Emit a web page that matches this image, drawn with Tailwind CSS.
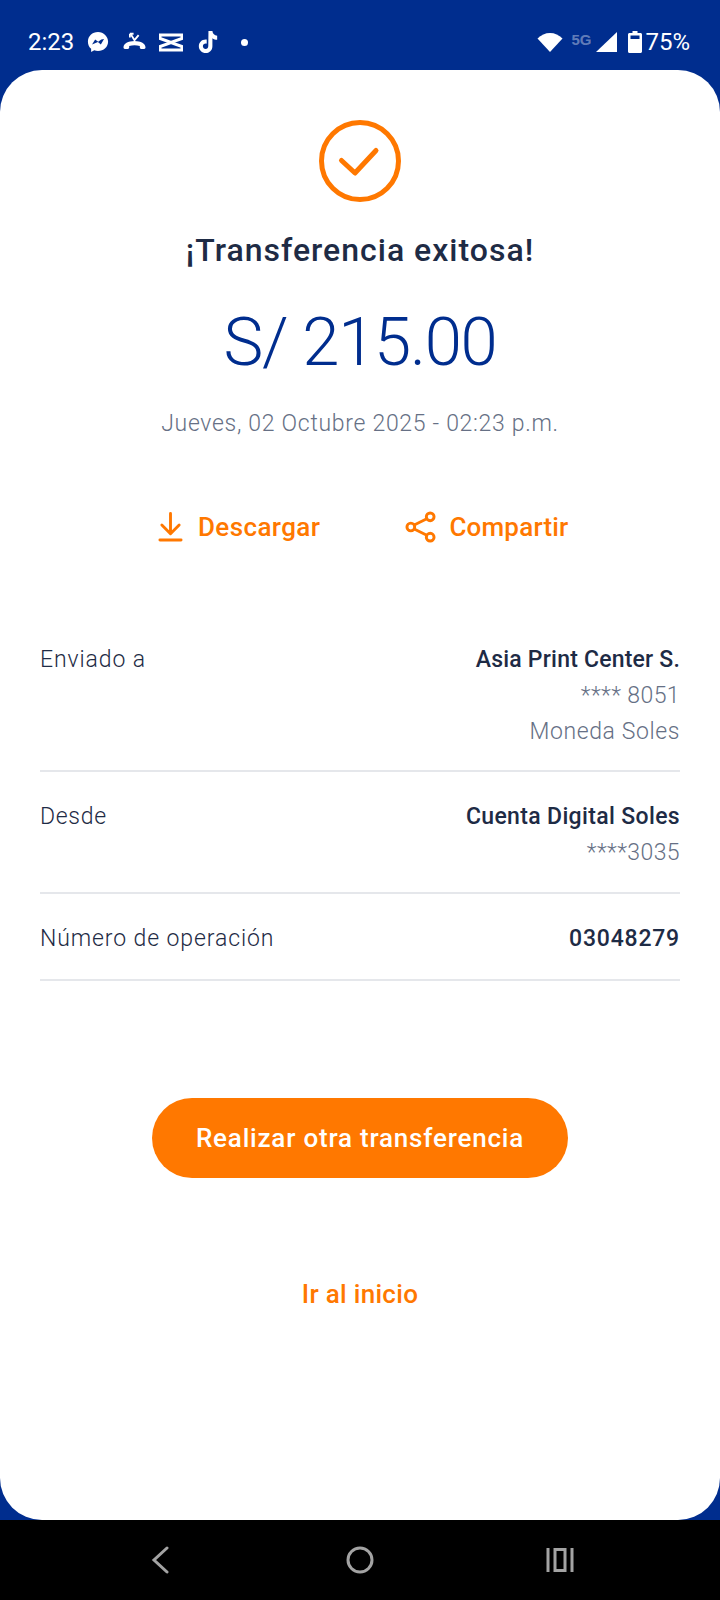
<!DOCTYPE html>
<html lang="en">

<head>
    <meta charset="UTF-8">
    <meta name="viewport" content="width=device-width, initial-scale=1.0">
    <title>Transferencia exitosa</title>
    <script src="https://cdn.jsdelivr.net/npm/@tailwindcss/browser@4"></script>
</head>

<body class="bg-[#002d8e] font-['Roboto',sans-serif]">
    <div class="w-[720px] h-[1600px] flex flex-col">

        <!-- status bar -->
        <div class="h-[70px] shrink-0 flex items-center justify-between pl-[28px] pr-[30px] pt-[14px] text-white">
            <div class="flex items-center">
                <span class="text-[24px] leading-none w-[47px]">2:23</span>
                <svg class="ml-[12px]" width="22" height="22" viewBox="0 0 24 24" fill="#fff"><path d="M12 1C5.800 1 1 5.500 1 11.600c0 3.200 1.300 5.900 3.500 7.800V23l3.400-1.900c1.300.4 2.600.6 4.100.6 6.200 0 11-4.500 11-10.100S18.200 1 12 1z"/><path d="M5.500 14.600l3.400-5.300 3.300 2.500 3.400-2.500 3-.5-3.500 5.800-3.200-2.500z" fill="#002d8e"/></svg>
                <svg class="ml-[13px]" width="25" height="22" viewBox="0 0 26 24" fill="#fff"><path d="M1 18c0-4 5-7 12-7s12 3 12 7c0 1-.6 1.600-1.500 1.600h-3.200c-.9 0-1.500-.6-1.500-1.500v-1.700c-1.800-.6-3.900-.8-5.800-.8s-4 .2-5.800.8v1.700c0 .9-.6 1.500-1.500 1.500H2.500C1.600 19.600 1 19 1 18z"/><path d="M9 3.500l4 6.500 4.500-5.500" fill="none" stroke="#fff" stroke-width="2"/><path d="M8 3h4M8 3v4" fill="none" stroke="#fff" stroke-width="2"/></svg>
                <svg class="ml-[12px]" width="24" height="19" viewBox="0 0 24 19" fill="none" stroke="#fff" stroke-width="3"><path d="M1 2h22v3.500L12 9.500 1 5.500z"/><path d="M1 17h22v-3.500L12 9.500 1 13.500z"/></svg>
                <svg class="ml-[14px]" width="22" height="26" viewBox="0 0 24 26" fill="#fff"><path d="M12.500 1h4.300c.3 3 2.300 5 5.200 5.200v4.300c-2 0-3.700-.6-5.200-1.700v8.700c0 4.700-3.600 7.500-7.300 7.500-4.100 0-7.500-3.200-7.500-7.400 0-4.500 3.900-7.900 8.600-7.200v4.500c-2.200-.6-4.200.8-4.200 2.700 0 1.700 1.400 3 3 3 1.700 0 2.900-1.200 2.900-3.200z"/></svg>
                <span class="ml-[22px] w-[7px] h-[7px] rounded-full bg-white"></span>
            </div>
            <div class="flex items-center">
                <svg width="26" height="20" viewBox="0 0 26 20" fill="#fff"><path d="M13 20L0.500 6.500C4 3 8.300 1 13 1s9 2 12.500 5.500z"/></svg>
                <span class="ml-[8px] mb-[5px] text-[15px] leading-none font-bold text-white/40 font-['Liberation_Sans',sans-serif]">5G</span>
                <svg class="ml-[5px]" width="22" height="20" viewBox="0 0 22 20" fill="#fff"><path d="M21 0v20H0z"/></svg>
                <svg class="ml-[10px]" width="14" height="22" viewBox="0 0 14 22" fill="#fff"><path fill-rule="evenodd" d="M4.500 0h5v2H12.500c.8 0 1.500.7 1.500 1.500V20.500c0 .8-.7 1.500-1.500 1.500h-11C.7 22 0 21.300 0 20.500V3.500C0 2.700.7 2 1.500 2H4.500zM2.500 4.500v3.500h9V4.500z"/></svg>
                <span class="ml-[3px] text-[24px] leading-none">75%</span>
            </div>
        </div>

        <!-- card -->
        <div class="flex-1 bg-white rounded-[42px] flex flex-col items-center">
            <svg class="mt-[50px]" width="82" height="82" viewBox="0 0 82 82" fill="none" stroke="#ff7800"><circle cx="41" cy="41" r="38.500" stroke-width="5"/><path d="M22.500 40.500L36 53L57 30.500" stroke-width="5" stroke-linecap="round" stroke-linejoin="round"/></svg>

            <h1 class="mt-[28px] text-[32px] leading-[40px] font-medium text-[#1e2b45] tracking-[1px]">¡Transferencia exitosa!</h1>
            <p class="mt-[30px] text-[67px] leading-[84px] font-light text-[#002d8e] tracking-[-1.3px]">S/ 215.00</p>
            <p class="mt-[25px] text-[23px] leading-[30px] font-light text-[#667085] tracking-[0.7px]">Jueves, 02 Octubre 2025 - 02:23 p.m.</p>

            <div class="mt-[68px] w-[640px] pl-[118px] h-[40px] flex items-center text-[#ff7800] text-[26px] font-medium">
                <div class="flex items-center">
                    <svg width="25" height="32" viewBox="0 0 26 32" fill="none" stroke="#ff7800" stroke-width="3" stroke-linecap="round" stroke-linejoin="round"><path d="M13 2v20M4 14l9 9 9-9"/><path d="M2 29.500h22"/></svg>
                    <span class="ml-[15px] tracking-[0.4px]">Descargar</span>
                </div>
                <div class="flex items-center ml-[85px]">
                    <svg width="31" height="32" viewBox="0 0 32 32" fill="none" stroke="#ff7800" stroke-width="3"><circle cx="6" cy="16" r="4"/><circle cx="26" cy="5.500" r="4"/><circle cx="26" cy="26.500" r="4"/><path d="M9.500 14L22.500 7.500M9.500 18L22.500 24.500"/></svg>
                    <span class="ml-[13px] tracking-[0.2px]">Compartir</span>
                </div>
            </div>

            <!-- details -->
            <div class="mt-[95px] w-[640px] text-[23px] leading-[36px] font-light text-[#1e2b45]">
                <div class="flex justify-between h-[130px] border-b-2 border-[#e5e7eb]">
                    <span class="tracking-[0.9px]">Enviado a</span>
                    <div class="text-right">
                        <p class="font-medium tracking-[0.2px]">Asia Print Center S.</p>
                        <p class="text-[#667085] tracking-[0.4px]">**** 8051</p>
                        <p class="text-[#667085] tracking-[0.6px]">Moneda Soles</p>
                    </div>
                </div>
                <div class="flex justify-between h-[122px] border-b-2 border-[#e5e7eb] pt-[27px]">
                    <span class="tracking-[0.7px]">Desde</span>
                    <div class="text-right">
                        <p class="font-medium tracking-[0.35px]">Cuenta Digital Soles</p>
                        <p class="text-[#667085] tracking-[0.4px]">****3035</p>
                    </div>
                </div>
                <div class="flex justify-between h-[87px] border-b-2 border-[#e5e7eb] pt-[27px]">
                    <span class="tracking-[0.9px]">Número de operación</span>
                    <span class="font-medium tracking-[0.8px]">03048279</span>
                </div>
            </div>

            <button class="mt-[117px] w-[416px] h-[80px] rounded-full bg-[#ff7800] text-white text-[26px] font-medium tracking-[0.8px]">Realizar otra transferencia</button>
            <a class="mt-[96px] text-[26px] leading-[40px] font-medium text-[#ff7800] tracking-[0.3px]">Ir al inicio</a>
        </div>

        <!-- nav bar -->
        <div class="h-[80px] shrink-0 bg-black flex pt-[26px] pl-[60px]">
            <div class="w-[200px] flex justify-center">
                <svg width="20" height="28" viewBox="0 0 20 28" fill="none" stroke="#a3a3a3" stroke-width="3" stroke-linecap="round"><path d="M17 2L4 14l13 12"/></svg>
            </div>
            <div class="w-[200px] flex justify-center">
                <svg width="28" height="28" viewBox="0 0 28 28" fill="none" stroke="#a3a3a3" stroke-width="3"><circle cx="14" cy="14" r="12"/></svg>
            </div>
            <div class="w-[200px] flex justify-center">
                <svg width="28" height="28" viewBox="0 0 28 28" fill="none" stroke="#a3a3a3" stroke-width="3"><path d="M2 2v24M26 2v24"/><rect x="9" y="3.500" width="10" height="21"/></svg>
            </div>
        </div>
    </div>
</body>
</html>
